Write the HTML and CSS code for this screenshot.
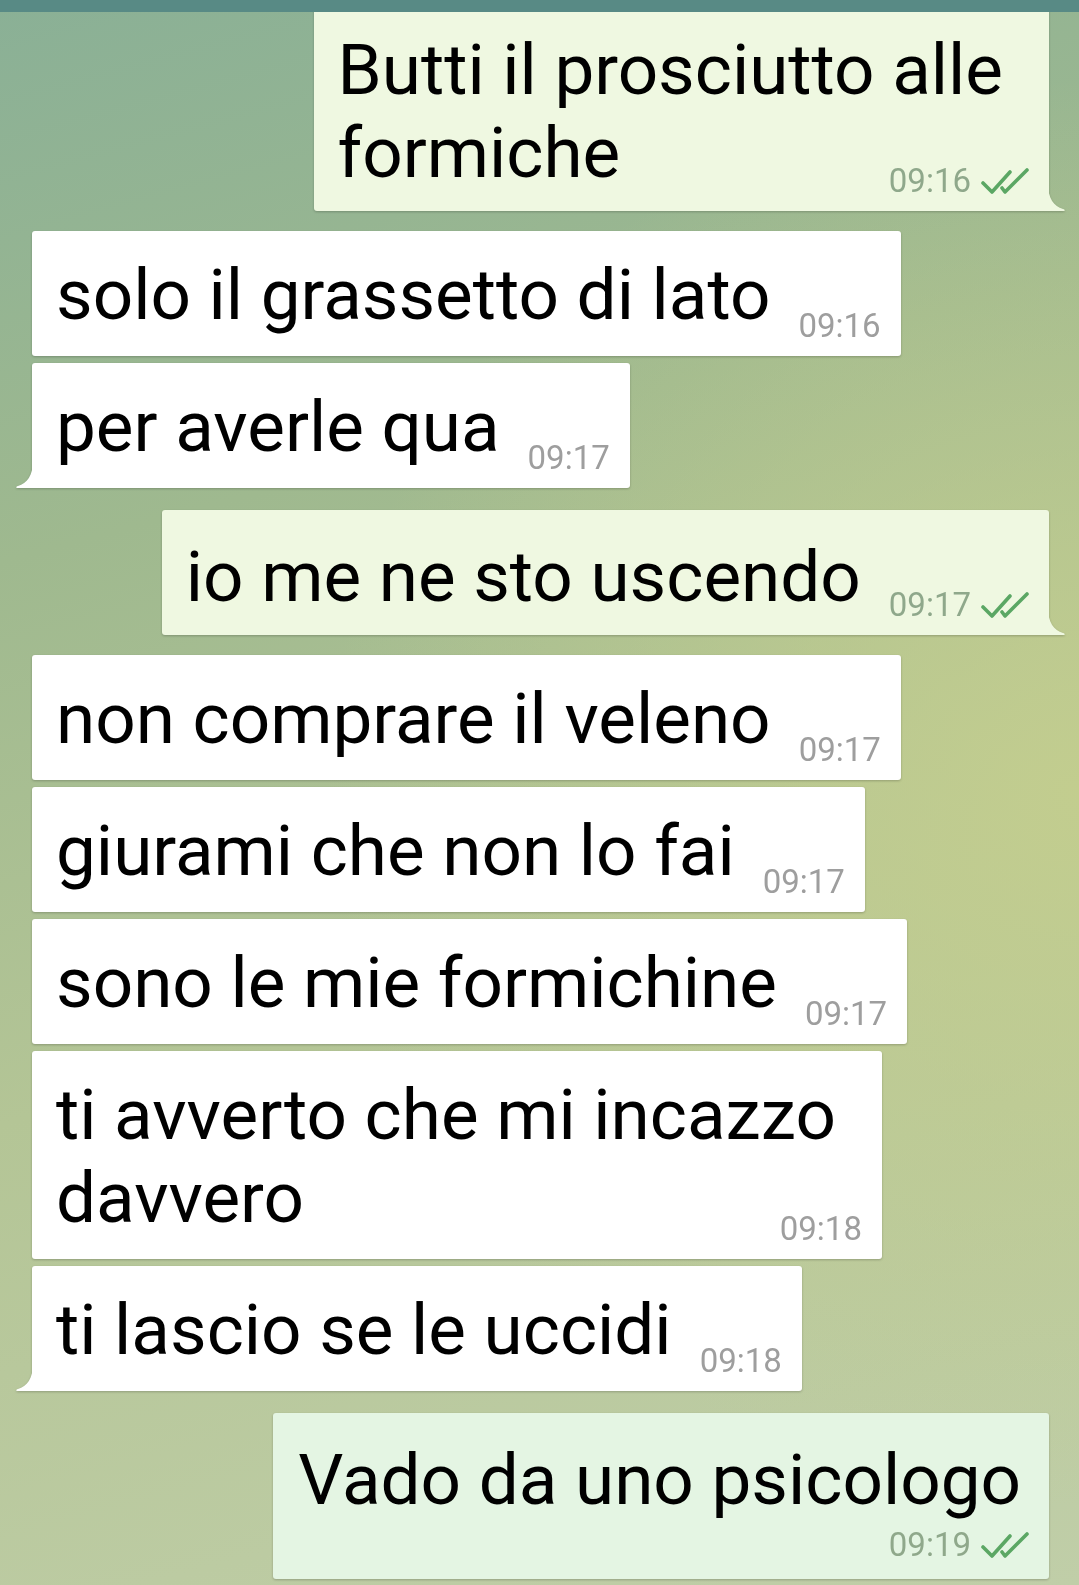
FILE: index.html
```html
<!DOCTYPE html>
<html lang="it">
<head>
  <meta charset="UTF-8" />
  <meta name="viewport" content="width=device-width, initial-scale=1.0"/>
  <title>Chat</title>
  <link rel="stylesheet" href="styles.css">
</head>
<body>
  <div class="topbar"></div>

  <div class="chat">
    <div class="msg out tail wrapped">
      <span class="text">Butti il prosciutto alle<br>formiche</span>
      <span class="meta">09:16<svg class="ticks" viewBox="0 0 48 26"><path d="M2 15 L11 24 L29 4"/><path d="M21 20 L24 24 L46 2"/></svg></span>
      <svg class="tail-shape" viewBox="0 0 18 28"><path d="M0 0 C0 16 6 23 15 26 C18 27 17 28 15 28 L0 28 Z"/></svg>
    </div>

    <div class="msg in">
      <span class="text">solo il grassetto di lato</span>
      <span class="meta">09:16</span>
    </div>
    <div class="msg in tail">
      <span class="text">per averle qua</span>
      <span class="meta">09:17</span>
      <svg class="tail-shape" viewBox="0 0 18 28"><path d="M18 0 C18 16 12 23 3 26 C0 27 1 28 3 28 L18 28 Z"/></svg>
    </div>

    <div class="msg out tail">
      <span class="text">io me ne sto uscendo</span>
      <span class="meta">09:17<svg class="ticks" viewBox="0 0 48 26"><path d="M2 15 L11 24 L29 4"/><path d="M21 20 L24 24 L46 2"/></svg></span>
      <svg class="tail-shape" viewBox="0 0 18 28"><path d="M0 0 C0 16 6 23 15 26 C18 27 17 28 15 28 L0 28 Z"/></svg>
    </div>

    <div class="msg in">
      <span class="text">non comprare il veleno</span>
      <span class="meta">09:17</span>
    </div>
    <div class="msg in">
      <span class="text">giurami che non lo fai</span>
      <span class="meta">09:17</span>
    </div>
    <div class="msg in">
      <span class="text">sono le mie formichine</span>
      <span class="meta">09:17</span>
    </div>
    <div class="msg in wrapped">
      <span class="text">ti avverto che mi incazzo<br>davvero</span>
      <span class="meta">09:18</span>
    </div>
    <div class="msg in tail">
      <span class="text">ti lascio se le uccidi</span>
      <span class="meta">09:18</span>
      <svg class="tail-shape" viewBox="0 0 18 28"><path d="M18 0 C18 16 12 23 3 26 C0 27 1 28 3 28 L18 28 Z"/></svg>
    </div>

    <div class="msg out mint stacked">
      <span class="text">Vado da uno psicologo</span>
      <span class="meta">09:19<svg class="ticks" viewBox="0 0 48 26"><path d="M2 15 L11 24 L29 4"/><path d="M21 20 L24 24 L46 2"/></svg></span>
    </div>
  </div>
</body>
</html>
```

FILE: styles.css
```css
html, body {
  margin: 0;
  height: 100%;
}

body {
  font-family: Roboto, "Noto Sans", sans-serif;
  color: #000;
  overflow: hidden;
  background:
    radial-gradient(ellipse 70% 45% at 100% 50%, rgba(196, 206, 142, 0.9), rgba(196, 206, 142, 0) 100%),
    linear-gradient(165deg, #8ab096 0%, #9fb98f 30%, #b4c596 60%, #c0cea8 100%);
}

.topbar {
  position: absolute;
  top: 0;
  left: 0;
  right: 0;
  height: 12px;
  background: #588a85;
  z-index: 2;
}

.chat {
  display: flex;
  flex-direction: column;
  padding-top: 3px;
}

.msg {
  position: relative;
  display: flow-root;
  max-width: 910px;
  padding: 22px 20px 20px 24px;
  font-size: 71px;
  line-height: 83px;
  border-radius: 3px;
  filter: drop-shadow(0 1px 1px rgba(0, 0, 0, 0.22));
}

.msg.in {
  align-self: flex-start;
  margin-left: 32px;
  background: #fff;
}

.msg.out {
  align-self: flex-end;
  margin-right: 30px;
  padding-top: 25px;
  padding-bottom: 17px;
  background: #eff8e1;
}

.msg.mint {
  background: #e4f5e3;
}

.msg + .msg {
  margin-top: 7px;
}

.msg.in + .msg.out {
  margin-top: 22px;
}

.msg.out + .msg.in {
  margin-top: 20px;
}

.meta {
  float: right;
  margin-left: 28px;
  margin-top: 59px;
  height: 24px;
  line-height: 27px;
  font-size: 33px;
  color: #9e9e9e;
  white-space: nowrap;
}

.msg.out .meta {
  margin-top: 56px;
  height: 27px;
  color: #8fa88b;
}

.ticks {
  width: 48px;
  height: 26px;
  margin-left: 10px;
  vertical-align: -2px;
  fill: none;
  stroke: #5ba764;
  stroke-width: 3.6;
  stroke-linecap: round;
  stroke-linejoin: round;
}

.msg.wrapped {
  padding-right: 46px;
}

.msg.wrapped .meta {
  margin-right: -26px;
}

.msg.stacked {
  padding-right: 28px;
  padding-left: 25px;
}

.msg.stacked .meta {
  float: none;
  display: block;
  text-align: right;
  margin: 0 -8px 0 0;
  height: 41px;
  line-height: 41px;
  padding-top: 3px;
  box-sizing: border-box;
}

.tail-shape {
  position: absolute;
  bottom: 0;
  width: 18px;
  height: 28px;
}

.msg.in .tail-shape {
  left: -17px;
  fill: #fff;
}

.msg.out .tail-shape {
  right: -17px;
  fill: #eff8e1;
}

.msg.out.tail {
  border-bottom-right-radius: 0;
}

.msg.in.tail {
  border-bottom-left-radius: 0;
}
```
